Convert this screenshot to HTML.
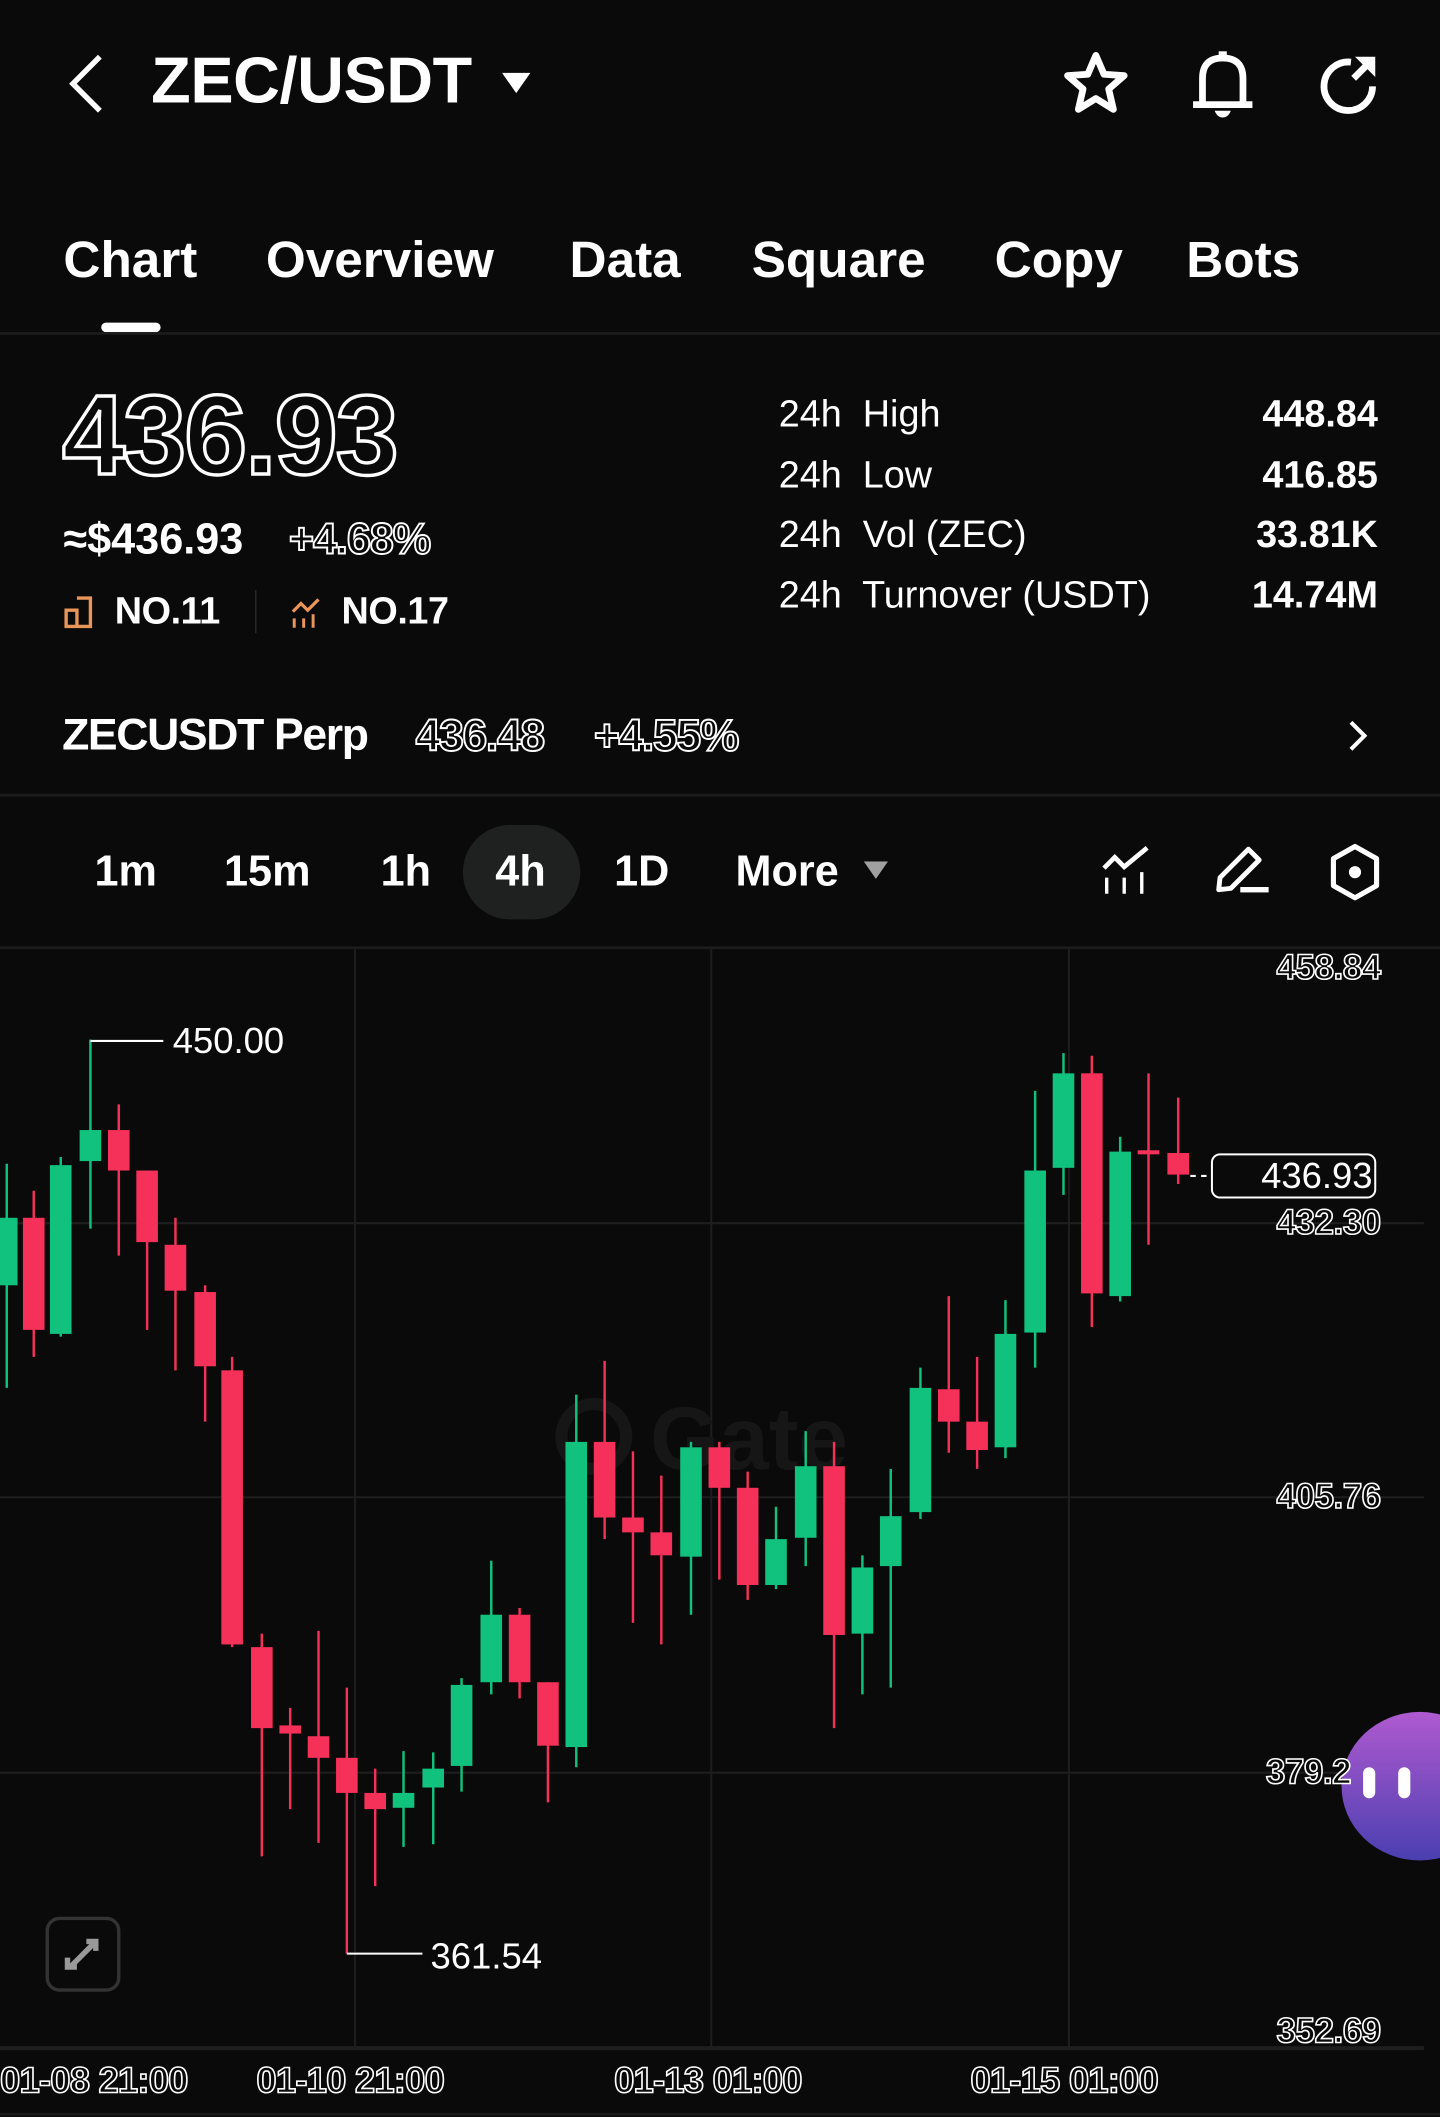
<!DOCTYPE html>
<html><head><meta charset="utf-8">
<style>
*{margin:0;padding:0;box-sizing:border-box}
html,body{width:1440px;height:2117px;background:#0a0a0a;overflow:hidden}
#w{position:absolute;left:0;top:0;width:1067px;height:1568px;transform:scale(1.3496,1.3501);transform-origin:0 0;font-family:"Liberation Sans",sans-serif;color:#fff}
.t{position:absolute;white-space:nowrap;line-height:1}
.b{font-weight:bold}
.o{color:#0a0a0a;-webkit-text-stroke:1.6px #fff;font-weight:bold}
.hr{position:absolute;left:0;width:1067px;height:2px;background:#1c1c1c}
</style></head><body><div id="w">
<svg class="t" style="left:48px;top:40px" width="32" height="44" viewBox="0 0 32 44"><path d="M26 2 L6 22 L26 42" stroke="#fff" stroke-width="4" fill="none"/></svg>
<div class="t b" style="left:112px;top:37px;font-size:48px;letter-spacing:-0.3px">ZEC/USDT</div>
<svg class="t" style="left:372px;top:52px" width="22" height="18"><path d="M0 2 H21 L10.5 17Z" fill="#fff"/></svg>
<svg class="t" style="left:786px;top:36px" width="52" height="52" viewBox="0 0 52 52"><path d="M26 5 L32 19 L47 20 L35.5 30 L39 45 L26 37 L13 45 L16.5 30 L5 20 L20 19Z" fill="none" stroke="#fff" stroke-width="5" stroke-linejoin="round"/></svg>
<svg class="t" style="left:880px;top:34px" width="52" height="54" viewBox="0 0 52 54"><path d="M11 43 V24 Q11 9 26 9 Q41 9 41 24 V43" fill="none" stroke="#fff" stroke-width="5"/><rect x="4" y="41" width="44" height="5" fill="#fff"/><rect x="23" y="4" width="6" height="6" fill="#fff"/><path d="M20 48 H32 Q30 53 26 53 Q22 53 20 48Z" fill="#fff"/></svg>
<svg class="t" style="left:973px;top:36px" width="52" height="52" viewBox="0 0 52 52"><path d="M44 28 A18 18 0 1 1 28 10" fill="none" stroke="#fff" stroke-width="5"/><path d="M30 22 L43 9" stroke="#fff" stroke-width="5"/><path d="M31 6 H46 V21Z" fill="#fff"/></svg>

<div class="t b" style="left:47px;top:174px;font-size:38px;letter-spacing:0px">Chart</div>
<div class="t b" style="left:197px;top:174px;font-size:38px;letter-spacing:0px">Overview</div>
<div class="t b" style="left:422px;top:174px;font-size:38px;letter-spacing:0px">Data</div>
<div class="t b" style="left:557px;top:174px;font-size:38px;letter-spacing:0px">Square</div>
<div class="t b" style="left:737px;top:174px;font-size:38px;letter-spacing:0px">Copy</div>
<div class="t b" style="left:879px;top:174px;font-size:38px;letter-spacing:0px">Bots</div>
<div class="t" style="left:75px;top:239px;width:44px;height:7px;border-radius:4px;background:#fff"></div>
<div class="hr" style="top:246px"></div>

<div class="t o" style="left:46px;top:280px;font-size:84px;letter-spacing:-1.5px;-webkit-text-stroke:2.5px #fff">436.93</div>
<div class="t b" style="left:47px;top:383px;font-size:32px;letter-spacing:0px">≈$436.93</div>
<div class="t o" style="left:214px;top:383px;font-size:32px;letter-spacing:-0.8px;-webkit-text-stroke:1.4px #fff">+4.68%</div>
<svg class="t" style="left:47px;top:440px" width="24" height="26" viewBox="0 0 24 26"><path d="M2 12 H10 V24 H2Z M10 3 H20 V24 H10" fill="none" stroke="#e8955a" stroke-width="2.5"/></svg>
<div class="t b" style="left:85px;top:439px;font-size:28px;letter-spacing:-0.3px">NO.11</div>
<div class="t" style="left:189px;top:437px;width:1px;height:32px;background:#2a2a2a"></div>
<svg class="t" style="left:215px;top:441px" width="24" height="26" viewBox="0 0 24 26"><path d="M2 12 L8 6 L13 11 L21 3" fill="none" stroke="#e8955a" stroke-width="2.4"/><path d="M3 17 V24 M10 17 V24 M17 14 V24" stroke="#e8955a" stroke-width="2.2"/></svg>
<div class="t b" style="left:253px;top:439px;font-size:28px;letter-spacing:-0.3px">NO.17</div>

<div class="t" style="left:577px;top:293px;font-size:28px;letter-spacing:0px">24h&nbsp; High</div>
<div class="t" style="left:577px;top:338px;font-size:28px;letter-spacing:0px">24h&nbsp; Low</div>
<div class="t" style="left:577px;top:382px;font-size:28px;letter-spacing:0px">24h&nbsp; Vol (ZEC)</div>
<div class="t" style="left:577px;top:427px;font-size:28px;letter-spacing:0px">24h&nbsp; Turnover (USDT)</div>
<div class="t b" style="right:46px;top:293px;font-size:28px;letter-spacing:0px">448.84</div>
<div class="t b" style="right:46px;top:338px;font-size:28px;letter-spacing:0px">416.85</div>
<div class="t b" style="right:46px;top:382px;font-size:28px;letter-spacing:0px">33.81K</div>
<div class="t b" style="right:46px;top:427px;font-size:28px;letter-spacing:0px">14.74M</div>

<div class="t b" style="left:46px;top:527px;font-size:33px;letter-spacing:-1px">ZECUSDT Perp</div>
<div class="t o" style="left:308px;top:528px;font-size:33px;letter-spacing:-1px;-webkit-text-stroke:1.4px #fff">436.48</div>
<div class="t o" style="left:440px;top:528px;font-size:33px;letter-spacing:-1px;-webkit-text-stroke:1.4px #fff">+4.55%</div>
<svg class="t" style="left:997px;top:532px" width="18" height="26"><path d="M4 3 L14 13 L4 23" fill="none" stroke="#fff" stroke-width="3"/></svg>
<div class="hr" style="top:588px"></div>

<div class="t" style="left:343px;top:611px;width:87px;height:70px;border-radius:35px;background:#1f2020"></div>
<div class="t b" style="left:70px;top:629px;font-size:32px;letter-spacing:0px">1m</div>
<div class="t b" style="left:166px;top:629px;font-size:32px;letter-spacing:0px">15m</div>
<div class="t b" style="left:282px;top:629px;font-size:32px;letter-spacing:0px">1h</div>
<div class="t b" style="left:367px;top:629px;font-size:32px;letter-spacing:0px">4h</div>
<div class="t b" style="left:455px;top:629px;font-size:32px;letter-spacing:0px">1D</div>
<div class="t b" style="left:545px;top:629px;font-size:32px;letter-spacing:0px">More</div>
<svg class="t" style="left:640px;top:638px" width="18" height="14"><path d="M0 0 H18 L9 13Z" fill="#a0a0a0"/></svg>
<svg class="t" style="left:816px;top:626px" width="38" height="38" viewBox="0 0 38 38"><path d="M2 17 L10 9 L17 16 L34 2" fill="none" stroke="#fff" stroke-width="3.5"/><path d="M4 24 V36 M17 24 V36 M30 20 V36" stroke="#fff" stroke-width="2.5"/></svg>
<svg class="t" style="left:900px;top:624px" width="42" height="40" viewBox="0 0 42 40"><path d="M3 35 L4 26 L25 5 L33 13 L12 34Z" fill="none" stroke="#fff" stroke-width="3.6" stroke-linejoin="round"/><rect x="19" y="33" width="21" height="4" fill="#fff"/></svg>
<svg class="t" style="left:984px;top:624px" width="40" height="44" viewBox="0 0 40 44"><path d="M20 3 L36 12 V32 L20 41 L4 32 V12Z" fill="none" stroke="#fff" stroke-width="3.8" stroke-linejoin="round"/><circle cx="20" cy="22" r="4.5" fill="#fff"/></svg>
<div class="hr" style="top:701px"></div>

<svg class="t" style="left:0;top:0" width="1067" height="1568" viewBox="0 0 1067 1568">
<g stroke="#1e1e1e" stroke-width="1.5">
<line x1="263" y1="703" x2="263" y2="1517"/><line x1="527" y1="703" x2="527" y2="1517"/><line x1="792" y1="703" x2="792" y2="1517"/>
<line x1="0" y1="906" x2="1055" y2="906"/><line x1="0" y1="1109" x2="1055" y2="1109"/><line x1="0" y1="1313" x2="1055" y2="1313"/>
</g>
<line x1="0" y1="1517" x2="1055" y2="1517" stroke="#1e1e1e" stroke-width="3"/>
<line x1="0" y1="1566" x2="1067" y2="1566" stroke="#1a1a1a" stroke-width="2"/>
<circle cx="440" cy="1064" r="24" fill="none" stroke="#161616" stroke-width="9"/>
<text x="555" y="1088" font-family="Liberation Sans" font-weight="bold" font-size="66" fill="#161616" text-anchor="middle">Gate</text>
<g id="c"></g>
<line x1="67" y1="771" x2="121" y2="771" stroke="#fff" stroke-width="1.5"/>
<line x1="257" y1="1447" x2="313" y2="1447" stroke="#fff" stroke-width="1.5"/>
<line x1="882" y1="871" x2="896" y2="871" stroke="#fff" stroke-width="1.5" stroke-dasharray="4 4"/>
<rect x="898" y="855" width="121" height="32" rx="6" fill="#0a0a0a" stroke="#fff" stroke-width="1.5"/>
<defs><linearGradient id="g" x1="0" y1="0" x2="0" y2="1"><stop offset="0" stop-color="#b05ad0"/><stop offset="1" stop-color="#4a3fb0"/></linearGradient></defs>
<ellipse cx="1052" cy="1323" rx="58" ry="55" fill="url(#g)"/>
<rect x="1010" y="1309" width="9" height="23" rx="4.5" fill="#fff"/><rect x="1036" y="1309" width="9" height="23" rx="4.5" fill="#fff"/>
<rect x="35" y="1421" width="53" height="53" rx="9" fill="#0a0a0a" stroke="#333" stroke-width="2.5"/>
<path d="M53 1456 L70 1439 M64 1438 H71 V1445 M50 1450 V1457 H57" fill="none" stroke="#999" stroke-width="4"/>
</svg>
<div class="t" style="left:128px;top:758px;font-size:27px;letter-spacing:0px">450.00</div>
<div class="t" style="left:319px;top:1436px;font-size:27px;letter-spacing:0px">361.54</div>
<div class="t" style="right:50px;top:858px;font-size:27px;letter-spacing:0px">436.93</div>
<div class="t o" style="right:44px;top:703px;font-size:26px;letter-spacing:-0.4px;-webkit-text-stroke:1.2px #fff">458.84</div>
<div class="t o" style="right:44px;top:892px;font-size:26px;letter-spacing:-0.4px;-webkit-text-stroke:1.2px #fff">432.30</div>
<div class="t o" style="right:44px;top:1095px;font-size:26px;letter-spacing:-0.4px;-webkit-text-stroke:1.2px #fff">405.76</div>
<div class="t o" style="left:938px;top:1299px;font-size:26px;letter-spacing:-0.4px;-webkit-text-stroke:1.2px #fff">379.2</div>
<div class="t o" style="right:44px;top:1491px;font-size:26px;letter-spacing:-0.4px;-webkit-text-stroke:1.2px #fff">352.69</div>
<div class="t o" style="left:0;top:1528px;font-size:27px;letter-spacing:-0.6px;-webkit-text-stroke:1.2px #fff">01-08 21:00</div>
<div class="t o" style="left:190px;top:1528px;font-size:27px;letter-spacing:-0.6px;-webkit-text-stroke:1.2px #fff">01-10 21:00</div>
<div class="t o" style="left:455px;top:1528px;font-size:27px;letter-spacing:-0.6px;-webkit-text-stroke:1.2px #fff">01-13 01:00</div>
<div class="t o" style="left:719px;top:1528px;font-size:27px;letter-spacing:-0.6px;-webkit-text-stroke:1.2px #fff">01-15 01:00</div>
</div>
<script>
var d=[[5,862,902,952,1028,1],[25,882,902,985,1005,0],[45,857,863,988,990,1],[67,770,837,860,910,1],[88,818,837,867,930,0],[109,867,867,920,985,0],[130,902,922,956,1015,0],[152,952,957,1012,1053,0],[172,1005,1015,1218,1220,0],[194,1210,1220,1280,1375,0],[215,1265,1278,1284,1340,0],[236,1208,1286,1302,1365,0],[257,1250,1302,1328,1447,0],[278,1310,1328,1340,1397,0],[299,1297,1328,1339,1368,1],[321,1298,1310,1324,1366,1],[342,1243,1248,1308,1327,1],[364,1156,1196,1246,1255,1],[385,1191,1196,1246,1258,0],[406,1246,1246,1293,1335,0],[427,1033,1068,1294,1309,1],[448,1008,1068,1124,1140,0],[469,1075,1124,1135,1202,0],[490,1093,1135,1152,1218,0],[512,1068,1072,1153,1196,1],[533,1068,1072,1102,1170,0],[554,1090,1102,1174,1185,0],[575,1116,1140,1174,1177,1],[597,1060,1086,1139,1160,1],[618,1068,1086,1211,1280,0],[639,1152,1161,1210,1255,1],[660,1088,1123,1160,1250,1],[682,1013,1028,1120,1125,1],[703,960,1029,1053,1076,0],[724,1005,1053,1074,1088,0],[745,963,988,1072,1080,1],[767,808,867,987,1013,1],[788,780,795,865,885,1],[809,782,795,958,983,0],[830,842,853,960,964,1],[851,795,852,855,922,0],[873,813,854,870,877,0]];
var s='';d.forEach(function(c){var col=c[5]?'#11c27f':'#f5315a';s+='<line x1="'+c[0]+'" y1="'+c[1]+'" x2="'+c[0]+'" y2="'+c[4]+'" stroke="'+col+'" stroke-width="1.8"/><rect x="'+(c[0]-8)+'" y="'+c[2]+'" width="16" height="'+Math.max(2,c[3]-c[2])+'" fill="'+col+'"/>';});
document.getElementById('c').innerHTML=s;
</script>
</body></html>
